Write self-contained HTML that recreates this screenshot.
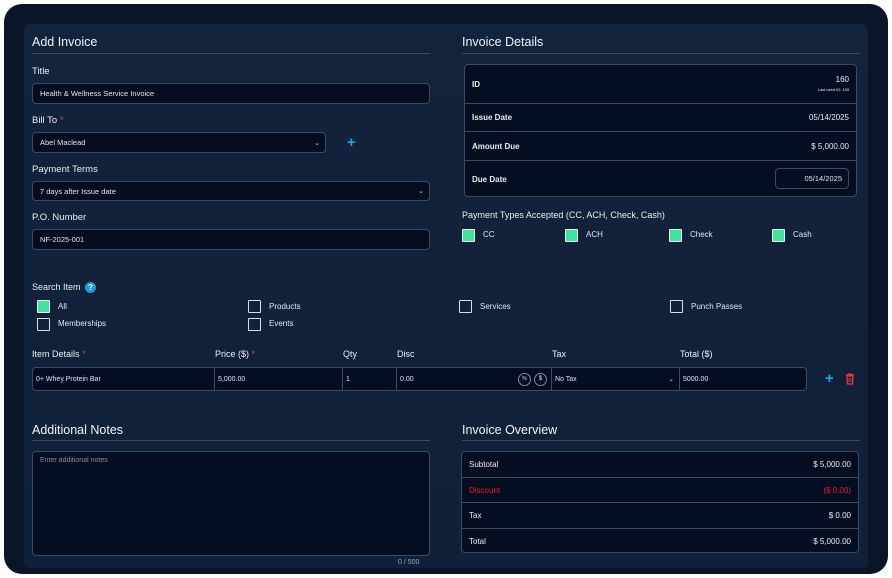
<!DOCTYPE html>
<html><head><meta charset="utf-8"><style>
*{box-sizing:border-box;margin:0;padding:0}
body{width:892px;height:578px;background:#fff;font-family:"Liberation Sans",sans-serif;color:#e8edf5;position:relative;overflow:hidden}
.a{position:absolute}
.outer{left:4px;top:4px;width:884px;height:570px;background:#0a1628;border-radius:18px}
.card{left:24px;top:24px;width:844px;height:544px;background:linear-gradient(180deg,#13233b,#112039);border-radius:6px}
.h{font-size:12.5px;color:#f0f3f8}
.line{height:1px;background:#3b4d66}
.lbl{font-size:9.5px;color:#e8edf5}
.in{background:#050d20;border:1px solid #3a4b62;border-radius:4px;font-size:7.5px;color:#dfe5ee;padding-left:7px;display:flex;align-items:center}
.star{color:#e53935}
.cb{width:13px;height:13px;border:1.5px solid #d8dde6;border-radius:1px}
.cb.on{background:#3ee59a;border-color:#e8eef5}
.sm{font-size:8px;color:#e0e6ef}
.tbl{border:1px solid #3a4b62;border-radius:4px;background:#050d20}
.row{position:absolute;left:0;right:0;border-bottom:1px solid #3a4b62;display:flex;align-items:center;justify-content:space-between;padding:0 7px;font-size:8px}
.row:last-child{border-bottom:none}
.b{font-weight:bold}
.chev{position:absolute;right:5px;top:50%;transform:translateY(-50%);font-size:7px;color:#ccc}
.cell{position:absolute;top:0;height:100%;border-right:1px solid #3a4b62;font-size:7px;color:#dfe5ee;display:flex;align-items:center;padding-left:3px}
</style></head><body>
<div class="a outer"></div>
<div class="a card"></div>

<div class="a h" style="left:32px;top:35px">Add Invoice</div>
<div class="a line" style="left:32px;top:53px;width:398px"></div>
<div class="a lbl" style="left:32px;top:66px">Title</div>
<div class="a in" style="left:32px;top:83px;width:398px;height:21px">Health &amp; Wellness Service Invoice</div>
<div class="a lbl" style="left:32px;top:115px">Bill To <span class="star">*</span></div>
<div class="a in" style="left:32px;top:132px;width:294px;height:21px">Abel Maclead<span class="chev">&#8964;</span></div>
<div class="a" style="left:347px;top:134px;color:#1ea7e8;font-size:15px;font-weight:bold">+</div>
<div class="a lbl" style="left:32px;top:164px">Payment Terms</div>
<div class="a in" style="left:32px;top:181px;width:398px;height:20px">7 days after Issue date<span class="chev">&#8964;</span></div>
<div class="a lbl" style="left:32px;top:212px">P.O. Number</div>
<div class="a in" style="left:32px;top:229px;width:398px;height:21px">NF-2025-001</div>

<div class="a h" style="left:462px;top:35px">Invoice Details</div>
<div class="a line" style="left:462px;top:53px;width:398px"></div>
<div class="a tbl" style="left:464px;top:64px;width:393px;height:133px">
 <div class="row b" style="top:0;height:39px"><span>ID</span><span style="text-align:right;font-weight:normal">160<br><span style="font-size:4px;font-style:italic">Last used ID: 159</span></span></div>
 <div class="row b" style="top:39px;height:28px"><span>Issue Date</span><span style="font-weight:normal">05/14/2025</span></div>
 <div class="row b" style="top:67px;height:29px"><span>Amount Due</span><span style="font-weight:normal">$ 5,000.00</span></div>
 <div class="row b" style="top:96px;height:37px;border-bottom:none"><span>Due Date</span></div>
</div>
<div class="a in" style="left:775px;top:168px;width:74px;height:21px;justify-content:flex-end;padding-right:6px">05/14/2025</div>
<div class="a lbl" style="left:462px;top:210px;font-size:9px">Payment Types Accepted (CC, ACH, Check, Cash)</div>
<div class="a cb on" style="left:462px;top:229px"></div><div class="a sm" style="left:483px;top:230px">CC</div>
<div class="a cb on" style="left:565px;top:229px"></div><div class="a sm" style="left:586px;top:230px">ACH</div>
<div class="a cb on" style="left:669px;top:229px"></div><div class="a sm" style="left:690px;top:230px">Check</div>
<div class="a cb on" style="left:772px;top:229px"></div><div class="a sm" style="left:793px;top:230px">Cash</div>

<div class="a lbl" style="left:32px;top:282px;font-size:9px">Search Item</div>
<div class="a" style="left:85px;top:282px;width:11px;height:11px;border-radius:50%;background:#1e9be0;color:#fff;font-size:8px;text-align:center;line-height:11px;font-weight:bold">?</div>
<div class="a cb on" style="left:37px;top:300px"></div><div class="a sm" style="left:58px;top:302px">All</div>
<div class="a cb" style="left:248px;top:300px"></div><div class="a sm" style="left:269px;top:302px">Products</div>
<div class="a cb" style="left:459px;top:300px"></div><div class="a sm" style="left:480px;top:302px">Services</div>
<div class="a cb" style="left:670px;top:300px"></div><div class="a sm" style="left:691px;top:302px">Punch Passes</div>
<div class="a cb" style="left:37px;top:318px"></div><div class="a sm" style="left:58px;top:319px">Memberships</div>
<div class="a cb" style="left:248px;top:318px"></div><div class="a sm" style="left:269px;top:319px">Events</div>

<div class="a lbl" style="left:32px;top:349px;font-size:9px">Item Details <span class="star">*</span></div>
<div class="a lbl" style="left:215px;top:349px;font-size:9px">Price ($) <span class="star">*</span></div>
<div class="a lbl" style="left:343px;top:349px;font-size:9px">Qty</div>
<div class="a lbl" style="left:397px;top:349px;font-size:9px">Disc</div>
<div class="a lbl" style="left:552px;top:349px;font-size:9px">Tax</div>
<div class="a lbl" style="left:680px;top:349px;font-size:9px">Total ($)</div>
<div class="a tbl" style="left:32px;top:367px;width:775px;height:24px">
 <div class="cell" style="left:0;width:182px">0+ Whey Protein Bar</div>
 <div class="cell" style="left:182px;width:128px">5,000.00</div>
 <div class="cell" style="left:310px;width:54px">1</div>
 <div class="cell" style="left:364px;width:155px">0.00
  <span style="position:absolute;right:20px;width:13px;height:13px;border:1px solid #889;border-radius:50%;font-size:5px;text-align:center;line-height:11px">%</span>
  <span style="position:absolute;right:4px;width:13px;height:13px;border:1px solid #889;border-radius:50%;font-size:6px;text-align:center;line-height:11px">$</span></div>
 <div class="cell" style="left:519px;width:128px">No Tax<span class="chev">&#8964;</span></div>
 <div class="cell" style="left:647px;width:126px;border-right:none">5000.00</div>
</div>
<div class="a" style="left:825px;top:370px;color:#1ea7e8;font-size:15px;font-weight:bold">+</div>
<svg class="a" style="left:845px;top:373px" width="10" height="12" viewBox="0 0 10 12"><path d="M1 2h8M3.5 2V1h3v1M2 3h6l-.5 8h-5z" fill="none" stroke="#e53935" stroke-width="1.3"/><path d="M4 5v4M6 5v4" stroke="#e53935" stroke-width="1"/></svg>

<div class="a h" style="left:32px;top:423px">Additional Notes</div>
<div class="a line" style="left:32px;top:440px;width:398px"></div>
<div class="a in" style="left:32px;top:451px;width:398px;height:105px;align-items:flex-start;padding-top:5px;color:#8090a6;font-size:7px">Enter additional notes</div>
<div class="a" style="left:398px;top:559px;font-size:7px;color:#9aa6b6">0 / 500</div>

<div class="a h" style="left:462px;top:423px">Invoice Overview</div>
<div class="a line" style="left:462px;top:440px;width:398px"></div>
<div class="a tbl" style="left:461px;top:451px;width:398px;height:102px">
 <div class="row" style="top:0;height:26px"><span>Subtotal</span><span>$ 5,000.00</span></div>
 <div class="row" style="top:26px;height:25px;color:#f0192d"><span>Discount</span><span>($ 0.00)</span></div>
 <div class="row" style="top:51px;height:26px"><span>Tax</span><span>$ 0.00</span></div>
 <div class="row" style="top:77px;height:25px;border-bottom:none"><span>Total</span><span>$ 5,000.00</span></div>
</div>
</body></html>
